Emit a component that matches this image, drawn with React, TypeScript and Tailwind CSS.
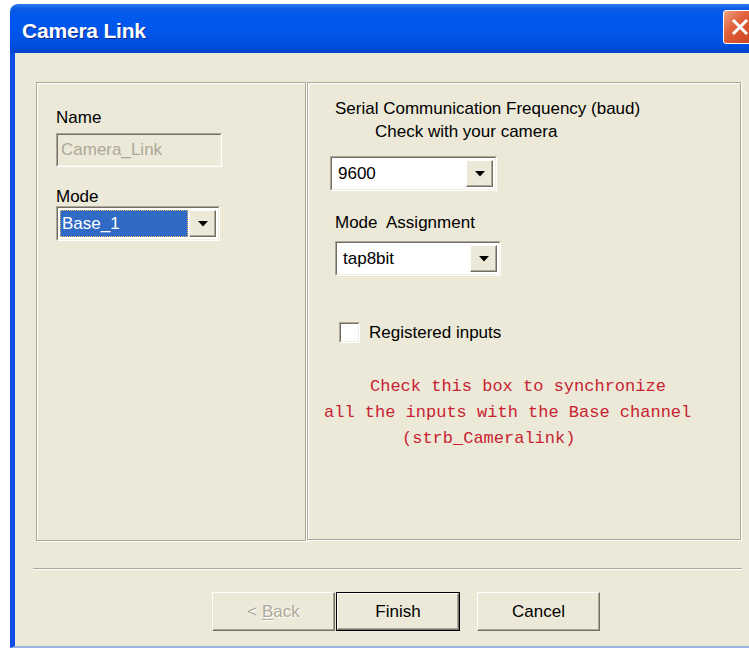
import React from "react";

const ui = { fontFamily: '"Liberation Sans", Arial, sans-serif' };
const mono = { fontFamily: '"Liberation Mono", "Courier New", monospace' };

function DropArrow() {
  return (
    <div className="w-[27px] h-full bg-[#ece9d8] border border-t-white border-l-white border-b-[#716f64] border-r-[#716f64] shadow-[inset_-1px_-1px_0_#aca899] flex items-center justify-center">
      <svg width="10" height="6" viewBox="0 0 10 6">
        <path d="M0 0H10L5 5.5Z" fill="#000" />
      </svg>
    </div>
  );
}

function Combo({
  value,
  width,
  selected,
}: {
  value: string;
  width: string;
  selected?: boolean;
}) {
  return (
    <div
      className={`${width} h-[35px] border border-t-[#aca899] border-l-[#aca899] border-b-white border-r-white`}
    >
      <div className="h-full border border-t-[#716f64] border-l-[#716f64] border-b-[#f1efe2] border-r-[#f1efe2] bg-white flex items-stretch p-[2px] gap-[1px]">
        <div className="flex-1 flex items-center">
          {selected ? (
            <div className="h-full w-full bg-[#316ac5] outline outline-1 outline-dotted outline-[#e8c060] -outline-offset-1 flex items-center pl-[2px] text-white text-[17px]">
              {value}
            </div>
          ) : (
            <span className="pl-[4px] text-[17px] text-black">{value}</span>
          )}
        </div>
        <DropArrow />
      </div>
    </div>
  );
}

function Button({
  children,
  def,
  disabled,
}: {
  children: React.ReactNode;
  def?: boolean;
  disabled?: boolean;
}) {
  return (
    <div
      className={`h-[39px] ${def ? "w-[124px] border border-black" : "w-[123px]"}`}
    >
      <div className="h-full bg-[#ece9d8] border border-t-white border-l-white border-b-[#716f64] border-r-[#716f64] shadow-[inset_-1px_-1px_0_#aca899] flex items-center justify-center">
        <span
          className={`text-[17px] ${disabled ? "text-[#aca899] [text-shadow:1px_1px_0_#fff]" : "text-black"}`}
        >
          {children}
        </span>
      </div>
    </div>
  );
}

export default function App() {
  return (
    <div
      className="w-[749px] h-[648px] overflow-hidden bg-white pt-[4px] pl-[10px]"
      style={ui}
    >
      <div className="w-[780px] h-[644px] flex flex-col rounded-t-[8px] overflow-hidden">
        {/* title bar */}
        <div className="h-[49px] shrink-0 flex items-center justify-between bg-[linear-gradient(to_bottom,#2e7cf5_0%,#0a5ae6_10%,#0058ee_30%,#0055ea_60%,#0050e0_85%,#0343cc_100%)] pl-[12px]">
          <span className="text-white font-bold text-[21px] tracking-[-0.2px] [text-shadow:1px_1px_0_#0a2a8a] mt-[4px]">
            Camera Link
          </span>
          <div className="mr-[33px] -mt-[3px] w-[34px] h-[34px] rounded-[3px] border border-white bg-[linear-gradient(to_bottom_right,#f0a080_0%,#e0603a_40%,#c8401a_100%)] flex items-center justify-center">
            <svg width="18" height="18" viewBox="0 0 18 18">
              <path d="M3 3L15 15M15 3L3 15" stroke="#fff" strokeWidth="3" strokeLinecap="square" />
            </svg>
          </div>
        </div>

        {/* dialog body */}
        <div className="flex-1 bg-[#ece9d8] border-l-[5px] border-l-[#0a4ee6] border-b-2 border-b-[#9db3e5] flex flex-col">
          <div className="flex pl-[21px] pt-[29px]">
            {/* left group */}
            <div className="w-[270px] h-[459px] border border-[#aca899] shadow-[inset_1px_1px_0_#fff,1px_1px_0_#fff] pl-[19px] pt-[26px] flex flex-col">
              <div className="text-[17px] leading-[18px] text-black">Name</div>
              <div className="mt-[6px] w-[166px] h-[34px] border border-t-[#aca899] border-l-[#aca899] border-b-white border-r-white">
                <div className="h-full border border-t-[#716f64] border-l-[#716f64] border-b-[#f1efe2] border-r-[#f1efe2] flex items-center pl-[3px] text-[17px] text-[#aca899]">
                  Camera_Link
                </div>
              </div>
              <div className="mt-[21px] text-[17px] leading-[18px] text-black">Mode</div>
              <div className="mt-[0px]">
                <Combo value="Base_1" width="w-[164px]" selected />
              </div>
            </div>

            {/* right group */}
            <div className="ml-[1px] w-[434px] h-[458px] border border-[#aca899] shadow-[inset_1px_1px_0_#fff,1px_1px_0_#fff] pt-[14px] flex flex-col">
              <div className="pl-[27px] text-[17px] leading-[23px] text-black">
                Serial Communication Frequency (baud)
              </div>
              <div className="pl-[67px] text-[17px] leading-[23px] text-black">
                Check with your camera
              </div>
              <div className="mt-[13px] pl-[22px]">
                <Combo value="9600" width="w-[167px]" />
              </div>
              <div className="mt-[23px] pl-[27px] text-[17px] leading-[18px] text-black whitespace-pre">
                {"Mode  Assignment"}
              </div>
              <div className="mt-[9px] pl-[27px]">
                <Combo value="tap8bit" width="w-[166px]" />
              </div>
              <div className="mt-[46px] pl-[31px] flex items-center gap-[9px]">
                <div className="w-[21px] h-[21px] border border-t-[#aca899] border-l-[#aca899] border-b-white border-r-white">
                  <div className="w-full h-full bg-white border border-t-[#716f64] border-l-[#716f64] border-b-[#f1efe2] border-r-[#f1efe2]" />
                </div>
                <span className="text-[17px] leading-[20px] text-black">Registered inputs</span>
              </div>
              <div
                className="mt-[31px] text-[17px] leading-[26px] text-[#c82332] whitespace-pre"
                style={mono}
              >
                <div className="pl-[62px]">Check this box to synchronize</div>
                <div className="pl-[16px]">all the inputs with the Base channel</div>
                <div className="pl-[94px]">(strb_Cameralink)</div>
              </div>
            </div>
          </div>

          {/* separator */}
          <div className="mt-[27px] ml-[18px] w-[709px] h-[2px] border-t border-t-[#aca899] border-b border-b-white" />

          {/* buttons */}
          <div className="mt-[22px] pl-[197px] flex items-start">
            <Button disabled>
              {"< "}
              <span className="underline underline-offset-2">B</span>ack
            </Button>
            <div className="ml-[1px]">
              <Button def>Finish</Button>
            </div>
            <div className="ml-[17px]">
              <Button>Cancel</Button>
            </div>
          </div>
        </div>
      </div>
    </div>
  );
}
